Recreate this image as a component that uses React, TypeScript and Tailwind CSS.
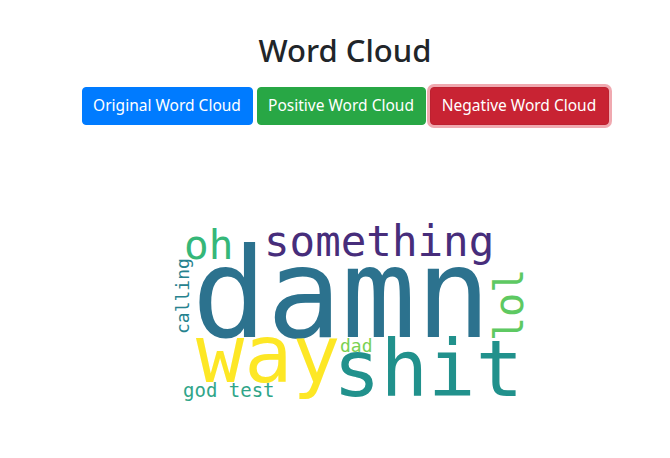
const words = [
  { text: 'damn', size: 'text-[124px]', color: 'text-[#2c728e]', pos: 'left-[192px] top-[32px]' },
  { text: 'something', size: 'text-[42.5px]', color: 'text-[#472d7b]', pos: 'left-[264px] top-[21px]' },
  { text: 'oh', size: 'text-[41px]', color: 'text-[#35b779]', pos: 'left-[184px] top-[25px]' },
  { text: 'way', size: 'text-[80px]', color: 'text-[#fde725]', pos: 'left-[196px] top-[115px]' },
  { text: 'shit', size: 'text-[79px]', color: 'text-[#21918c]', pos: 'left-[333px] top-[130px]' },
  { text: 'god test', size: 'text-[19px]', color: 'text-[#2fa589]', pos: 'left-[183px] top-[181px]' },
  { text: 'dad', size: 'text-[18px]', color: 'text-[#7ad151]', pos: 'left-[340px] top-[137px]' },
];

// vertical words read bottom to top
const vertical = [
  { text: 'lol', size: 'text-[40px]', color: 'text-[#5ec962]', pos: 'left-[489px] top-[141px]' },
  { text: 'calling', size: 'text-[18px]', color: 'text-[#26828e]', pos: 'left-[174px] top-[134px]' },
];

function Cloud() {
  return (
    <div className="relative h-[240px] mt-[75px] font-['DejaVu_Sans_Mono',monospace]">
      {words.map((w) => (
        <span key={w.text} className={`absolute leading-none whitespace-nowrap ${w.size} ${w.color} ${w.pos}`}>
          {w.text}
        </span>
      ))}
      {vertical.map((w) => (
        <span
          key={w.text}
          className={`absolute leading-none whitespace-nowrap origin-top-left -rotate-90 ${w.size} ${w.color} ${w.pos}`}
        >
          {w.text}
        </span>
      ))}
    </div>
  );
}

export default function App() {
  return (
    <div className="w-[670px] h-[458px] bg-white overflow-hidden font-['Noto_Sans',sans-serif]">
      <div className="pl-[20px] pt-[31px]">
        <h2 className="text-center text-[31px] font-medium leading-[38px] text-[#212529] mb-[18px]">
          Word Cloud
        </h2>
        <div className="flex justify-center gap-[4px]">
          <button className="w-[171px] h-[38px] rounded-[4px] bg-[#007bff] border border-[#007bff] text-white text-[15.5px]">
            Original Word Cloud
          </button>
          <button className="w-[169px] h-[38px] rounded-[4px] bg-[#28a745] border border-[#28a745] text-white text-[15.5px]">
            Positive Word Cloud
          </button>
          <button className="w-[179px] h-[38px] rounded-[4px] bg-[#c82333] border border-[#bd2130] text-white text-[15.5px] shadow-[0_0_0_3px_rgba(225,83,97,0.5)]">
            Negative Word Cloud
          </button>
        </div>
      </div>
      <Cloud />
    </div>
  );
}
